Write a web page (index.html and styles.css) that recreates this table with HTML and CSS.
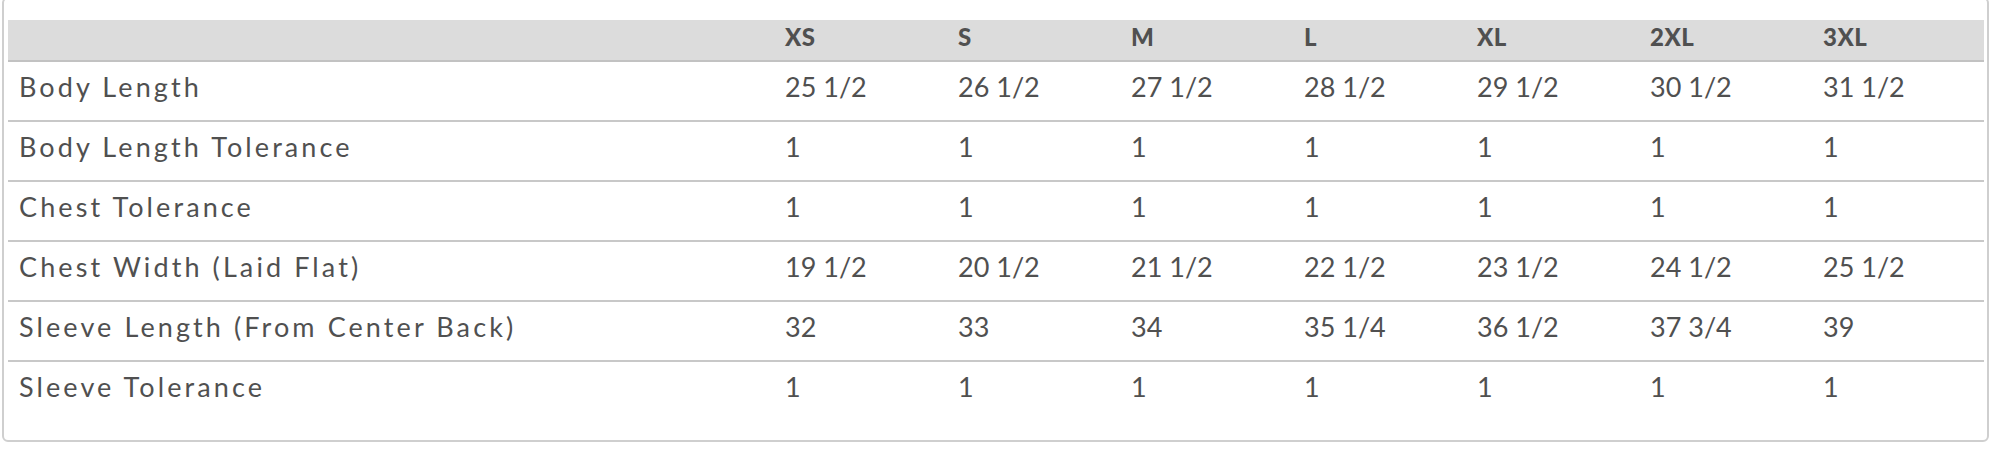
FILE: index.html
```html
<!DOCTYPE html>
<html lang="en">
<head>
<meta charset="utf-8">
<title>Size chart</title>
<link rel="stylesheet" href="styles.css">
</head>
<body>
<div class="card">
  <div class="chart">
    <div class="row head">
      <div class="cell label"></div>
      <div class="cell">XS</div>
      <div class="cell">S</div>
      <div class="cell">M</div>
      <div class="cell">L</div>
      <div class="cell">XL</div>
      <div class="cell">2XL</div>
      <div class="cell">3XL</div>
    </div>
    <div class="row">
      <div class="cell label">Body Length</div>
      <div class="cell">25 1/2</div><div class="cell">26 1/2</div><div class="cell">27 1/2</div><div class="cell">28 1/2</div><div class="cell">29 1/2</div><div class="cell">30 1/2</div><div class="cell">31 1/2</div>
    </div>
    <div class="row">
      <div class="cell label">Body Length Tolerance</div>
      <div class="cell">1</div><div class="cell">1</div><div class="cell">1</div><div class="cell">1</div><div class="cell">1</div><div class="cell">1</div><div class="cell">1</div>
    </div>
    <div class="row">
      <div class="cell label">Chest Tolerance</div>
      <div class="cell">1</div><div class="cell">1</div><div class="cell">1</div><div class="cell">1</div><div class="cell">1</div><div class="cell">1</div><div class="cell">1</div>
    </div>
    <div class="row">
      <div class="cell label">Chest Width (Laid Flat)</div>
      <div class="cell">19 1/2</div><div class="cell">20 1/2</div><div class="cell">21 1/2</div><div class="cell">22 1/2</div><div class="cell">23 1/2</div><div class="cell">24 1/2</div><div class="cell">25 1/2</div>
    </div>
    <div class="row">
      <div class="cell label">Sleeve Length (From Center Back)</div>
      <div class="cell">32</div><div class="cell">33</div><div class="cell">34</div><div class="cell">35 1/4</div><div class="cell">36 1/2</div><div class="cell">37 3/4</div><div class="cell">39</div>
    </div>
    <div class="row last">
      <div class="cell label">Sleeve Tolerance</div>
      <div class="cell">1</div><div class="cell">1</div><div class="cell">1</div><div class="cell">1</div><div class="cell">1</div><div class="cell">1</div><div class="cell">1</div>
    </div>
  </div>
</div>
</body>
</html>
```

FILE: styles.css
```css
html, body {
  margin: 0;
  padding: 0;
  background: #ffffff;
}

body {
  font-family: Lato, "Open Sans", sans-serif;
  color: #505050;
  overflow: hidden;
}

.card {
  margin: -3px 9px 0 2px;
  border: 2px solid #cfcfcf;
  border-radius: 6px;
  padding: 21px 3px 20px 4px;
}

.chart {
  display: flex;
  flex-direction: column;
}

.row {
  display: grid;
  grid-template-columns: 765px repeat(7, 1fr);
  height: 58px;
  border-bottom: 2px solid #c8c8c8;
  font-size: 27px;
  font-weight: 400;
  line-height: 32px;
}

.row.last {
  border-bottom: none;
}

.row.head {
  height: 40px;
  background: #dcdcdc;
  border-bottom-color: #c2c2c2;
  font-size: 24px;
  font-weight: 900;
  line-height: 32px;
  letter-spacing: 0.5px;
}

.cell {
  padding: 9px 0 0 12px;
  white-space: nowrap;
}

.row.head .cell {
  padding: 1px 0 0 12px;
}

.label {
  padding-left: 11px;
  letter-spacing: 3.1px;
}
```
